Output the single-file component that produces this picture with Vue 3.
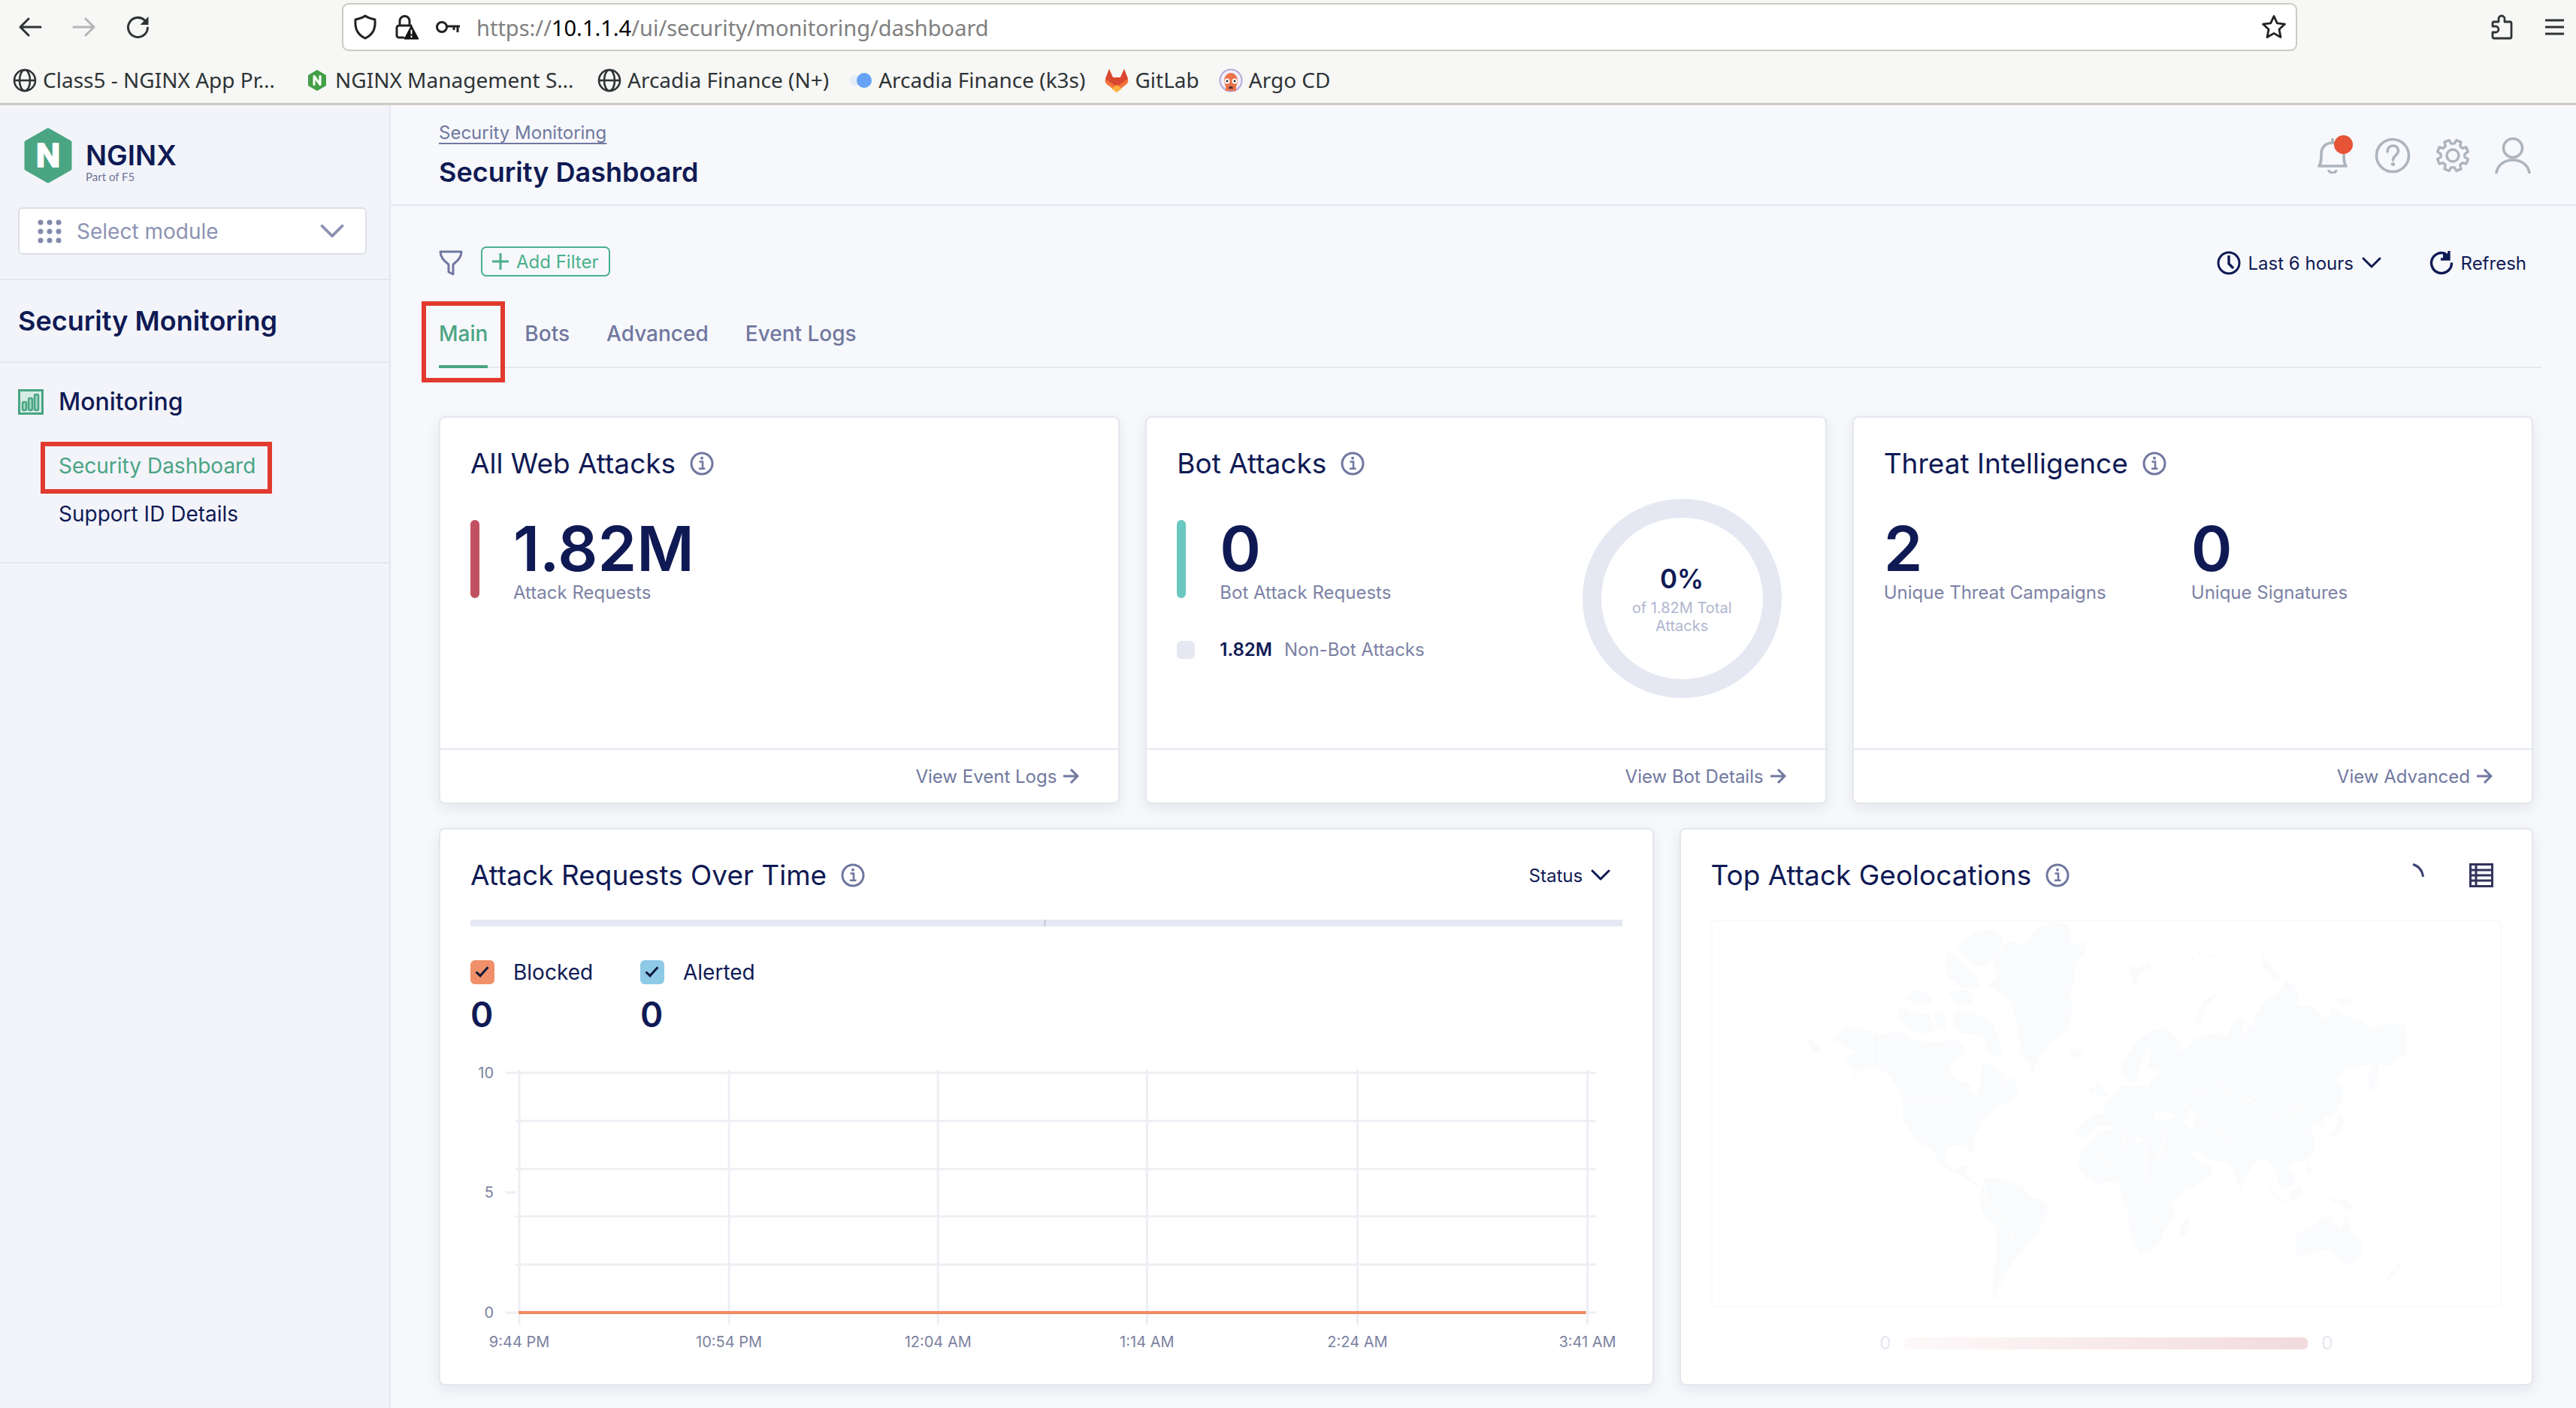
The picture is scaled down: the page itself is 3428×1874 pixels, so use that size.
<script setup>
import { ref } from 'vue'

const tabs = ['Main', 'Bots', 'Advanced', 'Event Logs']
const activeTab = ref('Main')

const series = ref([
  { id: 'blocked', label: 'Blocked', value: 0, on: true },
  { id: 'alerted', label: 'Alerted', value: 0, on: true },
])

const xTicks = [
  { x: 65, label: '9:44 PM' },
  { x: 344, label: '10:54 PM' },
  { x: 622, label: '12:04 AM' },
  { x: 900, label: '1:14 AM' },
  { x: 1180, label: '2:24 AM' },
  { x: 1486, label: '3:41 AM' },
]
const yTicks = [
  { y: 29, label: '10' },
  { y: 188, label: '5' },
  { y: 348, label: '0' },
]
const gridRows = [29, 93, 157, 220, 284, 348]

// Eight-tooth cog outline, centred on 24,24
function cogPath(teeth, outer, inner) {
  const pts = []
  const step = (Math.PI * 2) / teeth
  for (let i = 0; i < teeth; i++) {
    const a = i * step
    const parts = [[-0.33, inner], [-0.2, outer], [0.2, outer], [0.33, inner]]
    for (const [off, r] of parts) {
      const t = a + (off + 0.5) * step
      pts.push(`${(24 + r * Math.sin(t)).toFixed(1)} ${(24 - r * Math.cos(t)).toFixed(1)}`)
    }
  }
  return `M${pts.join('L')}Z`
}
const cog = cogPath(8, 21, 16)
</script>

<template>
  <div class="window">
    <svg class="sprite" aria-hidden="true">
      <symbol id="i-info" viewBox="0 0 32 32">
        <circle cx="16" cy="16" r="14" fill="none" stroke="currentColor" stroke-width="3" />
        <path d="M12.500 13.500h4.500v9M12 22.700h8.500" fill="none" stroke="currentColor" stroke-width="2.600" />
        <circle cx="16" cy="8.800" r="2" fill="currentColor" />
      </symbol>
      <symbol id="i-arrow" viewBox="0 0 22 22">
        <path d="M1 11h18M11 2l9 9-9 9" fill="none" stroke="currentColor" stroke-width="3" />
      </symbol>
      <symbol id="i-chevron" viewBox="0 0 26 16">
        <path d="M2 2l11 11L24 2" fill="none" stroke="currentColor" stroke-width="3" stroke-linecap="round" stroke-linejoin="round" />
      </symbol>
      <symbol id="i-globe" viewBox="0 0 32 32">
        <g fill="none" stroke="currentColor" stroke-width="2.600">
          <circle cx="16" cy="16" r="14" />
          <ellipse cx="16" cy="16" rx="7" ry="14" />
          <path d="M2 16h28" />
        </g>
      </symbol>
    </svg>

    <header class="browser">
      <div class="toolbar">
        <div class="nav-buttons">
          <button type="button" aria-label="Back">
            <svg width="32" height="32" viewBox="0 0 32 32"><path d="M30 16H3M14 5L3 16l11 11" fill="none" stroke="#2e3436" stroke-width="3" stroke-linecap="round" stroke-linejoin="round" /></svg>
          </button>
          <button type="button" aria-label="Forward">
            <svg width="32" height="32" viewBox="0 0 32 32"><path d="M2 16h27M18 5l11 11-11 11" fill="none" stroke="#b4b6b6" stroke-width="3" stroke-linecap="round" stroke-linejoin="round" /></svg>
          </button>
          <button type="button" aria-label="Reload">
            <svg width="32" height="32" viewBox="0 0 32 32"><path d="M28.500 17a13 13 0 1 1-4-10" fill="none" stroke="#2e3436" stroke-width="3" stroke-linecap="round" /><path d="M29.500 2v11h-11z" fill="#2e3436" /></svg>
          </button>
        </div>
        <div class="urlbar">
          <svg width="34" height="34" viewBox="0 0 34 34"><path d="M17 2c4 3 8 4 13 5 1 13-3 20-13 25C7 27 3 20 4 7c5-1 9-2 13-5z" fill="none" stroke="#222" stroke-width="3" stroke-linejoin="round" /></svg>
          <svg width="34" height="34" viewBox="0 0 34 34">
            <path d="M13 31H7a3 3 0 0 1-3-3V18a3 3 0 0 1 3-3h16M8 15V9a6 6 0 0 1 13 0v6" fill="none" stroke="#222" stroke-width="3" stroke-linecap="round" />
            <path d="M23.500 15L33 33H14z" fill="#111" stroke="#111" stroke-linejoin="round" />
            <path d="M23.500 20.500v6M23.500 28.500v2.500" stroke="#fff" stroke-width="2" />
          </svg>
          <svg width="34" height="34" viewBox="0 0 34 34"><circle cx="9" cy="17" r="6.500" fill="none" stroke="#222" stroke-width="3" /><path d="M16 16h17M30 16v8M25 16v5" fill="none" stroke="#222" stroke-width="3" /></svg>
          <div class="address" role="textbox" aria-label="Address">https://<b>10.1.1.4</b>/ui/security/monitoring/dashboard</div>
          <button type="button" aria-label="Bookmark this page">
            <svg width="34" height="34" viewBox="0 0 34 34"><path d="M17 2.500l4.300 9.400 10.200 1.200-7.500 7 2 10.400-9-5.100-9 5.100 2-10.400-7.500-7 10.200-1.200z" fill="none" stroke="#222" stroke-width="2.800" stroke-linejoin="round" /></svg>
          </button>
        </div>
        <div class="tool-buttons">
          <button type="button" aria-label="Extensions">
            <svg width="34" height="34" viewBox="0 0 34 34"><path d="M5 12a2 2 0 0 1 2-2h6V6a4 4 0 0 1 8 0v4h7a2 2 0 0 1 2 2v18a2 2 0 0 1-2 2H7a2 2 0 0 1-2-2v-6h4a4 4 0 0 0 0-8H5z" fill="none" stroke="#2e3436" stroke-width="2.800" stroke-linejoin="round" /></svg>
          </button>
          <button type="button" aria-label="Menu">
            <svg width="28" height="28" viewBox="0 0 28 28"><path d="M1 5h25M1 14h25M1 23h25" stroke="#2e3436" stroke-width="3" /></svg>
          </button>
        </div>
      </div>
      <nav class="bookmarks" aria-label="Bookmarks">
        <a href="#"><svg width="32" height="32"><use href="#i-globe" /></svg><span class="clipped">Class5 - NGINX App Pr…</span></a>
        <a href="#">
          <svg width="32" height="32" viewBox="0 0 32 32"><path d="M16 3l11 6.500v13L16 29 5 22.500v-13z" fill="#43a047" stroke="#43a047" stroke-width="2" stroke-linejoin="round" /><path d="M12 21.500v-11l8 11v-11" fill="none" stroke="#fff" stroke-width="3" stroke-linejoin="round" stroke-linecap="round" /></svg><span class="clipped">NGINX Management S…</span></a>
        <a href="#"><svg width="32" height="32"><use href="#i-globe" /></svg>Arcadia Finance (N+)</a>
        <a href="#">
          <svg width="32" height="32" viewBox="0 0 32 32"><circle cx="9" cy="16" r="7" fill="#e3ecf8" /><circle cx="21" cy="16" r="10" fill="#66a3f5" /></svg>Arcadia Finance (k3s)</a>
        <a href="#">
          <svg width="32" height="32" viewBox="0 0 32 32">
            <path d="M6 1l5 11h10l5-11 5 13c1 3 0 6-3 8L16 31 4 22c-3-2-4-5-3-8z" fill="#f2733c" />
            <path d="M6 1l5 11h10l5-11 5 13-15 10L1 14z" fill="#d9472f" />
            <path d="M16 22l7 5-7 5-7-5z" fill="#fbb13c" />
          </svg>GitLab</a>
        <a href="#">
          <svg width="32" height="32" viewBox="0 0 32 32">
            <circle cx="16" cy="16" r="14.500" fill="#f3f0fb" stroke="#b6a8dc" stroke-width="2" />
            <path d="M7 16a9 10 0 0 1 18 0c0 4-2 6-2 9v5H9v-5c0-3-2-5-2-9z" fill="#e9744e" />
            <circle cx="11" cy="17" r="3.500" fill="#fff" /><circle cx="21" cy="17" r="3.500" fill="#fff" />
            <circle cx="11" cy="17" r="1.400" fill="#222" /><circle cx="21" cy="17" r="1.400" fill="#222" />
            <path d="M13 27a3 3 0 0 1 6 0z" fill="#40303a" />
          </svg>Argo CD</a>
      </nav>
    </header>

    <div class="app">
      <aside class="sidebar">
        <div class="brand-block">
          <a class="brand" href="#" aria-label="NGINX, Part of F5">
            <svg width="66" height="74" viewBox="0 0 66 74">
              <path d="M33 3l29 16.500v35L33 71 4 54.500v-35z" fill="#4aa583" stroke="#4aa583" stroke-width="5" stroke-linejoin="round" />
              <text x="33" y="52" text-anchor="middle" class="brand-letter">N</text>
            </svg>
            <span class="brand-text"><span class="brand-name">NGINX</span><span class="brand-sub">Part of F5</span></span>
          </a>
          <div class="module">
            <svg class="dots" width="34" height="34" viewBox="0 0 34 34" fill="#8289ab">
              <template v-for="r in 3" :key="r"><circle v-for="c in 3" :key="c" :cx="c * 12 - 7" :cy="r * 12 - 7" r="3.500" /></template>
            </svg>
            <select aria-label="Select module"><option>Select module</option></select>
            <svg class="caret" width="32" height="20"><use href="#i-chevron" /></svg>
          </div>
        </div>
        <h2 class="section-name">Security Monitoring</h2>
        <nav class="menu" aria-label="Security Monitoring">
          <div class="menu-group">
            <svg width="34" height="34" viewBox="0 0 34 34">
              <rect x="1.500" y="1.500" width="31" height="31" fill="#d6ece4" stroke="#4aa583" stroke-width="3" />
              <g fill="#a3d6c3" stroke="#4aa583" stroke-width="2.500"><rect x="6" y="17" width="5" height="11" rx="2" /><rect x="14" y="12" width="5" height="16" rx="2" /><rect x="22" y="7" width="5" height="21" rx="2" /></g>
            </svg>
            Monitoring
          </div>
          <a class="menu-item current" href="#">Security Dashboard</a>
          <a class="menu-item" href="#">Support ID Details</a>
        </nav>
      </aside>

      <div class="content">
        <header class="page-head">
          <div>
            <a class="crumb" href="#">Security Monitoring</a>
            <h1>Security Dashboard</h1>
          </div>
          <div class="head-icons">
            <button type="button" class="bell" aria-label="Notifications">
              <svg width="48" height="48" viewBox="0 0 48 48" fill="none" stroke="#adb4bc" stroke-width="3.600"><path d="M24 1v6M6 38c3-4 3-9 3-16 0-9 6-15 15-15s15 6 15 15c0 7 0 12 3 16zM19 43a5 4 0 0 0 10 0" stroke-linejoin="round" /></svg>
              <span class="dot"></span>
            </button>
            <button type="button" aria-label="Help">
              <svg width="48" height="48" viewBox="0 0 48 48" fill="none" stroke="#adb4bc" stroke-width="3.600"><circle cx="24" cy="24" r="21.500" /><path d="M17 19c0-5 3-8 7.500-8s7 3 7 6.500c0 6-7 6-7 12.500" stroke-linecap="round" /><circle cx="24.500" cy="35.500" r="2.600" fill="#adb4bc" stroke="none" /></svg>
            </button>
            <button type="button" aria-label="Settings">
              <svg width="48" height="48" viewBox="0 0 48 48" fill="none" stroke="#adb4bc" stroke-width="3.400" stroke-linejoin="round"><path :d="cog" /><circle cx="24" cy="24" r="8" /></svg>
            </button>
            <button type="button" aria-label="Account">
              <svg width="48" height="48" viewBox="0 0 48 48" fill="none" stroke="#adb4bc" stroke-width="3.600"><circle cx="24" cy="14" r="12.500" /><path d="M2 47c2-11 11-17 22-17s20 6 22 17" stroke-linecap="round" /></svg>
            </button>
          </div>
        </header>

        <main class="page">
          <div class="filters">
            <svg class="funnel" width="32" height="34" viewBox="0 0 32 34"><path d="M2 2h28c0 7-4 11-11 17v13l-6-3V19C6 13 2 9 2 2z" fill="none" stroke="#7078a0" stroke-width="3" stroke-linejoin="round" /></svg>
            <button type="button" class="add-filter"><svg width="22" height="22" viewBox="0 0 22 22"><path d="M11 0v22M0 11h22" stroke="currentColor" stroke-width="3" /></svg>Add Filter</button>
            <div class="picker range">
              <svg width="32" height="32" viewBox="0 0 32 32" fill="none" stroke="currentColor" stroke-width="3"><circle cx="16" cy="16" r="14" /><path d="M16 6v11l6 6" stroke-width="3.400" /></svg>
              <select aria-label="Time range"><option>Last 6 hours</option></select>
              <svg width="26" height="16"><use href="#i-chevron" /></svg>
            </div>
            <button type="button" class="refresh">
              <svg width="32" height="32" viewBox="0 0 32 32"><path d="M29.500 15.500A13.500 13.500 0 1 1 22 4" fill="none" stroke="currentColor" stroke-width="3.400" /><path d="M26 0v11H15" fill="none" stroke="currentColor" stroke-width="3.400" /><path d="M18 4l8-1v8h-8z" fill="currentColor" /></svg>
              Refresh
            </button>
          </div>

          <nav class="tabs" aria-label="Dashboard views">
            <button v-for="t in tabs" :key="t" type="button" class="tab" :class="{ active: t === activeTab }" @click="activeTab = t">{{ t }}</button>
          </nav>

          <section class="row three">
            <article class="card">
              <div class="card-body">
                <h3>All Web Attacks <svg width="32" height="32"><use href="#i-info" /></svg></h3>
                <div class="stats">
                  <div class="metric">
                    <span class="stripe red"></span>
                    <div><div class="big">1.82M</div><div class="caption">Attack Requests</div></div>
                  </div>
                </div>
              </div>
              <footer><a href="#">View Event Logs<svg width="22" height="22"><use href="#i-arrow" /></svg></a></footer>
            </article>

            <article class="card">
              <div class="card-body">
                <h3>Bot Attacks <svg width="32" height="32"><use href="#i-info" /></svg></h3>
                <div class="bot">
                  <div class="bot-stats">
                    <div class="metric">
                      <span class="stripe teal"></span>
                      <div><div class="big">0</div><div class="caption">Bot Attack Requests</div></div>
                    </div>
                    <div class="legend-row"><span class="swatch"></span><strong>1.82M</strong><span>Non-Bot Attacks</span></div>
                  </div>
                  <div class="donut"><strong>0%</strong><span>of 1.82M Total Attacks</span></div>
                </div>
              </div>
              <footer><a href="#">View Bot Details<svg width="22" height="22"><use href="#i-arrow" /></svg></a></footer>
            </article>

            <article class="card">
              <div class="card-body">
                <h3>Threat Intelligence <svg width="32" height="32"><use href="#i-info" /></svg></h3>
                <div class="stats pair">
                  <div><div class="big">2</div><div class="caption">Unique Threat Campaigns</div></div>
                  <div><div class="big">0</div><div class="caption">Unique Signatures</div></div>
                </div>
              </div>
              <footer><a href="#">View Advanced<svg width="22" height="22"><use href="#i-arrow" /></svg></a></footer>
            </article>
          </section>

          <section class="row two">
            <article class="card panel">
              <div class="panel-head">
                <h3>Attack Requests Over Time <svg width="32" height="32"><use href="#i-info" /></svg></h3>
                <div class="picker status">
                  <select aria-label="Group by"><option>Status</option></select>
                  <svg width="26" height="16"><use href="#i-chevron" /></svg>
                </div>
              </div>
              <div class="split-bar"><span></span><span></span></div>
              <div class="series">
                <div v-for="s in series" :key="s.id" class="series-item">
                  <label><input v-model="s.on" type="checkbox" :class="s.id" />{{ s.label }}</label>
                  <strong>{{ s.value }}</strong>
                </div>
              </div>
              <svg class="chart" viewBox="0 0 1532 400" role="img" aria-label="Attack requests over time">
                <g stroke="#eeeff4" stroke-width="3">
                  <path v-for="y in gridRows" :key="'r' + y" :d="`M60 ${y}H1498`" />
                  <path v-for="t in xTicks" :key="'c' + t.x" :d="`M${t.x} 25V364`" />
                  <path v-for="t in yTicks" :key="'t' + t.y" :d="`M47 ${t.y}H60`" />
                </g>
                <path d="M64 348H1484" stroke="#f08a60" stroke-width="4" />
                <text v-for="t in yTicks" :key="t.label" x="31" :y="t.y + 7" text-anchor="end">{{ t.label }}</text>
                <text v-for="t in xTicks" :key="t.label" :x="t.x" y="394" text-anchor="middle">{{ t.label }}</text>
              </svg>
            </article>

            <article class="card panel">
              <div class="panel-head">
                <h3>Top Attack Geolocations <svg width="32" height="32"><use href="#i-info" /></svg></h3>
                <div class="geo-tools">
                  <svg width="32" height="32" viewBox="0 0 32 32" role="img" aria-label="Loading"><path d="M17 1.500Q29 5 30.500 18" fill="none" stroke="#3b4270" stroke-width="3" /></svg>
                  <button type="button" aria-label="Show as table">
                    <svg width="32" height="32" viewBox="0 0 32 32"><path d="M1.500 1.500h29v29h-29zM1.500 9h29M1.500 16h29M1.500 23h29M9 1.500v29" fill="none" stroke="#33325c" stroke-width="3" /></svg>
                  </button>
                </div>
              </div>
              <svg class="map" viewBox="98 288 1342 1020" preserveAspectRatio="none" role="img" aria-label="World map">
                <g fill="#fafbfd" stroke="#fafbfd" stroke-width="1" stroke-linejoin="round">
                  <path d="M300 600l25-32 40 10 20 12 30-8 25 20 40 10 30-10 15 15 0 20-20 35-5 20 20 22 15 5 8 30 8-2 5-55 0-25 15 0 20 25 5 25 15-15 8 40-5 15-12 10-20 12-12 25-12 10-6 12 0 10-8 22-2 20 2 22-8 0-8-20-15 0-15 8-3 25 0 20 15 15 10-12 14 2-6 15 5 10 12 18 15 10-15-3-20-25-20-12-20-20-5-20-15-25-15-25 10 35-15-28-12-28-10-25 0-50-8-30-15-35-15-20-30-3-25 35 15-30-12-10-8-25 15-8-15-20z" />
                  <path d="M258 597l12 12 15 15-8 12-10-5zM417 515l20 15 30 5 12 45-30 5-35-35zM500 370l12 15 12 10 22 40 8 30-30 0-22-25-8-30zM515 350l30-32 30-5 18 22-12 45-25 30-20-12zM500 475l35-5 8 35-30 5zM440 470l25 12 10 20-20 8-25-15zM510 530l35 0 30 30 12 45 5 45-25-15-8-45-40-5-10-30zM475 530l18 0 2 45-15-5z" />
                  <path d="M575 400l8-30 18-30 25 12 22-40 25-20 25 2 10 22-2 22 15 15 15-12-8 40-15 20 2 45-10 30 5 35-5 60-10 20-25 20-15 35-12 40-10-30-10-25-5-60-5-30-8-45-20-20-18-20 18-25z" />
                  <path d="M708 632l12-6 10 6-8 14-12 4zM562 968l30 5 35 20 10 25 30 15 2 22-12 38-3 27-20 20-12 30-12 20-8 20-10 30-10 25 0 25-10-8 5-40 5-90 0-50-25-45-6-30 6-30z" />
                  <path d="M745 800l22 0-2-20 25-45 0-15 18 8 35-5 0-18 18-15-12-10-12 0 10-50-8-12-12 45-5 40-15 12-15-25 5-25 20-50 25-35 25-8 20 20 10 20-10 18 20-5 15-25 35-15 15 10 20-55 10 10 0 45 8-25 12-10 0-20 18-45 22-15 12-35 15 15 8 30-5 20 30 5 15 30 12-2 5-25 25 22 25 15 20 20 30-18 25 10 0 75-30 30-18-5 0 50-12 22-5-30 10-45-20 8-25 5-20 30 12 20 0 30-15 45-18 8 0 25-10-10-15 10 10 25 0 35-15 25-30 12 10 25 0 30-12 10-10-10 10 25-15-35-5-30-15-30-20 10-15 40-8 35-15-60-8-15-35-8-15-20-15 0 10 20 30 20 0 20-35 35-15 5-25-70-10-25 5-25-25 0-15-10-5-15-15 20-15-10-20-35-22 0-10 25-20 10-8-20z" />
                  <path d="M755 845l38-5 8 30 35 5 40 0 15 65 10 20 20 0-20 45-20 30 2 40-15 30-8 30-15 30-18 8-15-50-5-25-2-50-12-35 0-25-10-10-30 5-20-15-12-30 5-35 15-30zM908 1075l-12 20-2 30 10-5 6-25z" />
                  <path d="M1093 1115l25-12 20-30 15 0 0 20 15 10 8-35 8 35 20 35 0 30-12 25-22 3-15-35-30 0-25 15-8-10zM1182 1212l8 8-6 5zM1268 1193l4 10-22 38-5-5zM1080 1010l20-22 2 18-10 20-10-2zM1043 985l30 50-8-5-20-35zM1145 1020l35 10 12 28-12-8-25-20zM1165 800l8 15-5 35-20 8 12-20zM1105 905l8 10-2 15zM1112 930l6 20-6 10zM995 975l6 8-4 5z" />
                  <path d="M803 408l18 5 20-18 5 15-20 15-8 40-8-40zM962 475l-25 20-18 60 8 12 10-50zM1035 375l8 20 22 45-10 5-20-40zM905 388l12-6 2 4zM928 366l4 12-6 2zM940 380l14-4 0 4zM1160 495l18-5 15 15-25 3zM752 705l8 20 12 25-20 2zM742 730l8 5-5 12z" />
                </g>
                <g fill="none" stroke="#fff" stroke-width="2">
                  <path d="M370 580v100M418 768h80l35 20 15 15 20-18M560 968l5 70 40 70 10 35M800 845l2 60 70 8M835 870v110M740 895l60 60M810 990h80M810 1090h60M850 1000v90M870 840l-15 90M905 750l55-25 45 40 15-12-40 55-75-30zM1018 770l60 10 30-10-30 40-50-15zM990 880l-60-60M1110 740l20 40M850 720v60" />
                </g>
                <path d="M912 785l10 20-8 40-14-25zM855 790l30 10-12 18-25-4z" fill="#fff" />
              </svg>
              <div class="scale"><span>0</span><i></i><span>0</span></div>
            </article>
          </section>
        </main>
      </div>
    </div>
  </div>
</template>

<style>
body {
  margin: 0;
  background: #f7f8fb;
}
</style>

<style scoped>
.window {
  font-family: Inter, "Noto Sans", sans-serif;
  font-size: 24px;
  color: #0f1a54;
  min-height: 100vh;
  display: flex;
  flex-direction: column;
}
.window *,
.window *::after {
  box-sizing: border-box;
}
.sprite {
  position: absolute;
  width: 0;
  height: 0;
}
svg {
  flex: none;
}
button {
  font: inherit;
  color: inherit;
  background: none;
  border: 0;
  padding: 0;
  display: flex;
  align-items: center;
  cursor: pointer;
}
select {
  font: inherit;
  color: inherit;
  appearance: none;
  background: none;
  border: 0;
  padding: 0;
  cursor: pointer;
}
a {
  color: inherit;
  text-decoration: none;
}
h1,
h2,
h3 {
  margin: 0;
}

/* Browser chrome */
.browser {
  background: #f7f7f5;
  border-bottom: 3px solid #cfc9c4;
  font-family: "Noto Sans", sans-serif;
  font-size: 28px;
  color: #2e3436;
}
.toolbar {
  display: flex;
  align-items: center;
  padding: 4px 14px 4px 24px;
}
.nav-buttons {
  display: flex;
  gap: 40px;
  width: 431px;
}
.urlbar {
  flex: 1;
  max-width: 2602px;
  height: 64px;
  display: flex;
  align-items: center;
  gap: 21px;
  padding: 0 12px;
  background: #fff;
  border: 2px solid #cfc9c4;
  border-radius: 9px;
}
.address {
  flex: 1;
  font-size: 29px;
  color: #808080;
}
.address b {
  font-weight: 400;
  color: #000;
}
.tool-buttons {
  margin-left: auto;
  display: flex;
  gap: 40px;
}
.bookmarks {
  display: flex;
  gap: 26px;
  height: 65px;
  padding: 2px 0 0 17px;
}
.bookmarks a {
  display: flex;
  align-items: center;
  gap: 8px;
}
.bookmarks svg {
  margin-top: 2px;
}
.clipped {
  width: 323px;
}

/* Application */
.app {
  flex: 1;
  display: flex;
}
.sidebar {
  width: 520px;
  flex: none;
  background: #f3f4fa;
  border-right: 2px solid #e4e6f1;
}
.brand-block {
  padding: 30px 30px 32px 24px;
  border-bottom: 2px solid #e4e6f1;
}
.brand {
  display: flex;
  gap: 17px;
  margin: 0 7px;
}
.brand-letter {
  font-size: 42px;
  font-weight: 700;
  fill: #fff;
  stroke: #fff;
  stroke-width: 2;
  stroke-linejoin: round;
}
.brand-text {
  display: flex;
  flex-direction: column;
  padding-top: 17px;
}
.brand-name {
  font-size: 37px;
  line-height: 40px;
  font-weight: 600;
}
.brand-sub {
  font-family: Lato, sans-serif;
  font-size: 15px;
  line-height: 16px;
  color: #6d7597;
}
.module {
  position: relative;
  display: flex;
  align-items: center;
  margin-top: 32px;
  height: 63px;
  background: #fff;
  border: 2px solid #dcdfe8;
  border-radius: 6px;
  font-size: 28px;
  color: #8d93b2;
}
.module select {
  flex: 1;
  height: 100%;
  padding-left: 76px;
}
.module svg {
  position: absolute;
  pointer-events: none;
}
.dots {
  left: 23px;
}
.caret {
  right: 28px;
}
.section-name {
  font-size: 36px;
  line-height: 48px;
  font-weight: 600;
  padding: 30px 24px;
  border-bottom: 2px solid #e4e6f1;
}
.menu {
  display: flex;
  flex-direction: column;
  align-items: flex-start;
  padding: 27px 24px 32px;
  border-bottom: 2px solid #e4e6f1;
}
.menu-group {
  display: flex;
  align-items: center;
  gap: 20px;
  font-size: 32px;
  line-height: 50px;
  font-weight: 500;
}
.menu-item {
  position: relative;
  margin-left: 54px;
  font-size: 28px;
  line-height: 64px;
}
.menu-item.current {
  color: #4aa583;
  margin-top: 28px;
}
.menu-item.current::after,
.tab.active::after {
  content: "";
  position: absolute;
  border: 6px solid #e23a2e;
}
.menu-item.current::after {
  inset: 0 -22px -5px -24px;
}
.content {
  flex: 1;
  min-width: 0;
}
.page-head {
  display: flex;
  align-items: center;
  justify-content: space-between;
  padding: 20px 60px 20px 64px;
  border-bottom: 2px solid #e4e6f1;
}
.crumb {
  color: #7078a0;
  line-height: 34px;
  text-decoration: underline;
  text-underline-offset: 5px;
}
h1 {
  font-size: 36px;
  line-height: 46px;
  font-weight: 600;
  margin-top: 12px;
}
.head-icons {
  display: flex;
  gap: 32px;
  padding-top: 2px;
}
.bell {
  position: relative;
}
.dot {
  position: absolute;
  top: -3px;
  right: -3px;
  width: 25px;
  height: 25px;
  border-radius: 50%;
  background: #e75336;
}
.page {
  padding: 54px 57px 32px 64px;
}
.filters {
  display: flex;
  align-items: center;
}
.funnel {
  margin-right: 24px;
}
.funnel,
.range,
.refresh {
  margin-top: 4px;
}
.add-filter {
  gap: 10px;
  height: 40px;
  padding: 0 13px;
  border: 2px solid #4bb08c;
  border-radius: 7px;
  color: #4bb08c;
}
.picker {
  display: flex;
  align-items: center;
  gap: 10px;
}
.range {
  margin-left: auto;
  margin-right: 64px;
}
.refresh {
  gap: 10px;
  margin-right: 9px;
}
.tabs {
  display: flex;
  gap: 49px;
  margin: 58px -11px 64px 0;
  box-shadow: inset 0 -2px #e4e6f1;
}
.tab {
  position: relative;
  padding-bottom: 24px;
  border-bottom: 4px solid transparent;
  font-size: 28px;
  line-height: 36px;
  font-weight: 500;
  color: #7078a0;
}
.tab.active {
  color: #4aa583;
  border-color: #4aa583;
}
.tab.active::after {
  inset: -25px -23px -23px -23px;
}

/* Cards */
.row {
  display: grid;
  gap: 34px;
}
.three {
  grid-template-columns: repeat(3, minmax(0, 1fr));
  margin-bottom: 32px;
}
.two {
  grid-template-columns: minmax(0, 1616fr) minmax(0, 1136fr);
}
.card {
  background: #fff;
  border: 2px solid #e5e7ee;
  border-radius: 8px;
  box-shadow: 0 6px 18px rgba(20, 30, 80, 0.08);
}
.card-body {
  min-height: 440px;
  padding: 38px 40px 0;
}
h3 {
  display: flex;
  align-items: center;
  gap: 19px;
  font-size: 37px;
  line-height: 46px;
  font-weight: 400;
}
h3 svg {
  color: #7078a0;
}
.stats {
  padding-top: 52px;
}
.pair {
  display: grid;
  grid-template-columns: 1fr 1fr;
  padding-right: 4px;
}
.metric {
  display: flex;
  gap: 45px;
}
.stripe {
  width: 12px;
  height: 104px;
  border-radius: 6px;
}
.red {
  background: #c15160;
}
.teal {
  background: #6bc8c0;
}
.big {
  font-size: 83px;
  line-height: 76px;
  font-weight: 600;
}
.caption {
  line-height: 42px;
  color: #7b82a5;
}
.bot {
  display: flex;
  justify-content: space-between;
  padding: 24px 18px 0 0;
}
.bot-stats {
  padding-top: 28px;
}
.legend-row {
  display: flex;
  align-items: center;
  margin-top: 34px;
  line-height: 42px;
  color: #7b82a5;
}
.legend-row strong {
  font-weight: 600;
  color: #0f1a54;
  margin-right: 16px;
}
.swatch {
  width: 24px;
  height: 24px;
  margin-right: 33px;
  border-radius: 6px;
  background: #e5e8f2;
}
.donut {
  width: 265px;
  height: 265px;
  border: 25px solid #e5e8f2;
  border-radius: 50%;
  display: flex;
  flex-direction: column;
  align-items: center;
  justify-content: center;
  gap: 5px;
}
.donut strong {
  font-size: 35px;
  line-height: 44px;
  font-weight: 600;
}
.donut span {
  width: 150px;
  font-size: 20px;
  line-height: 24px;
  text-align: center;
  color: #b0b6cf;
}
.card footer {
  display: flex;
  justify-content: flex-end;
  height: 72px;
  padding-right: 52px;
  border-top: 2px solid #e5e8f2;
}
.card footer a {
  display: flex;
  align-items: center;
  gap: 8px;
  color: #7078a0;
}
.panel {
  padding: 38px 40px 40px;
}
.panel-head {
  display: flex;
  align-items: center;
  justify-content: space-between;
}
.status {
  margin-right: 16px;
}
.split-bar {
  display: grid;
  grid-template-columns: 1fr 1fr;
  height: 9px;
  margin-top: 36px;
  background: #e5e8f2;
}
.split-bar span:first-child {
  border-right: 3px solid #cdd2de;
}
.series {
  display: flex;
  margin-top: 45px;
}
.series-item {
  width: 226px;
}
.series-item label {
  display: flex;
  align-items: center;
  gap: 25px;
  font-size: 28px;
  line-height: 32px;
}
.series-item input {
  appearance: none;
  width: 32px;
  height: 32px;
  margin: 0;
  border-radius: 6px;
  position: relative;
}
.blocked {
  background: #f0906a;
}
.alerted {
  background: #8ec9e6;
}
.series-item input:checked::after {
  content: "";
  position: absolute;
  left: 11px;
  top: 5px;
  width: 9px;
  height: 17px;
  border: solid #101a3c;
  border-width: 0 3px 3px 0;
  transform: rotate(42deg);
}
.series-item strong {
  display: block;
  margin-top: 12px;
  font-size: 46px;
  line-height: 56px;
  font-weight: 600;
}
.chart {
  display: block;
  width: 100%;
  margin-top: 21px;
}
.chart text {
  font-size: 20px;
  fill: #7b82a0;
}
.geo-tools {
  display: flex;
  gap: 60px;
  margin-right: 11px;
}
.map {
  display: block;
  width: 100%;
  aspect-ratio: 1052 / 516;
  margin-top: 36px;
  border: 2px solid #fafafb;
  border-radius: 6px;
}
.scale {
  display: flex;
  align-items: center;
  justify-content: center;
  gap: 18px;
  margin-top: 34px;
  line-height: 28px;
  color: #e6e7ef;
}
.scale i {
  width: 51%;
  height: 16px;
  border-radius: 6px;
  background: linear-gradient(to right, #fef9f9, #f2dadd);
}
</style>
